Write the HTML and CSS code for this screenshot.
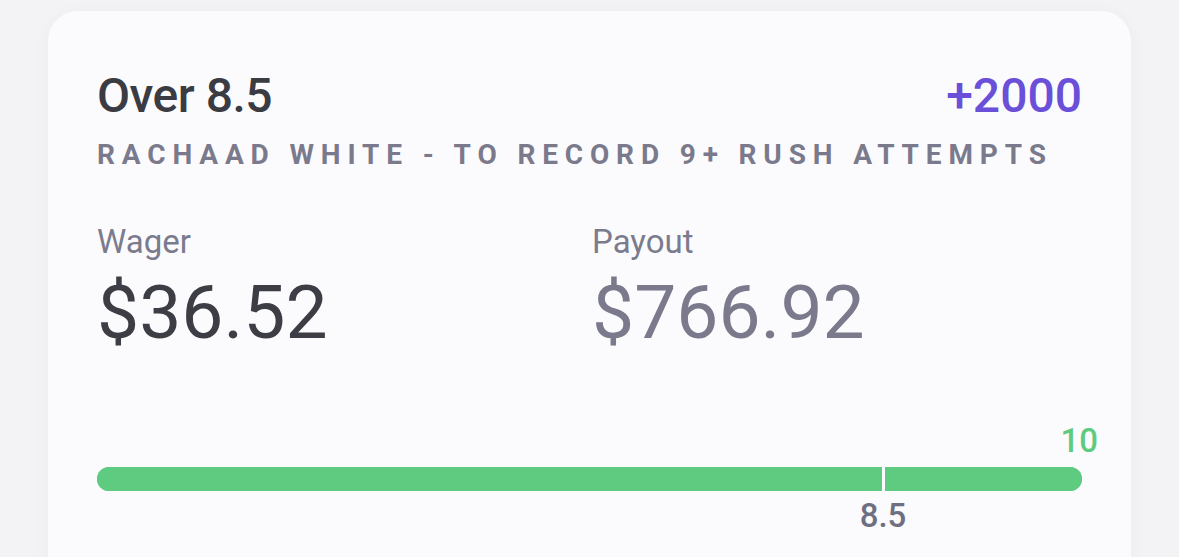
FILE: index.html
```html
<!DOCTYPE html>
<html>
<head>
<meta charset="utf-8">
<link rel="stylesheet" href="styles.css">
</head>
<body>
<div class="card">
  <div class="head">
    <div class="title">Over 8.5</div>
    <div class="odds">+2000</div>
  </div>
  <div class="sub">RACHAAD WHITE - TO RECORD 9+ RUSH ATTEMPTS</div>
  <div class="amounts">
    <div class="col">
      <div class="label">Wager</div>
      <div class="value dark">$36.52</div>
    </div>
    <div class="col">
      <div class="label">Payout</div>
      <div class="value">$766.92</div>
    </div>
  </div>
  <div class="progress">
    <div class="track">
      <div class="end-label">10</div>
      <div class="fill"></div>
      <div class="tick" style="left: 79.8%"></div>
      <div class="tick-label" style="left: 79.8%">8.5</div>
    </div>
  </div>
</div>
</body>
</html>
```
FILE: styles.css
```css
html, body {
  margin: 0;
  padding: 0;
  background: #f3f3f5;
  font-family: Roboto, "Liberation Sans", sans-serif;
  overflow: hidden;
}
.card {
  margin: 11px 48px 0 48px;
  height: 600px;
  background: #fbfbfd;
  border-radius: 30px;
  box-shadow: 0 2px 18px rgba(0,0,0,0.035);
  padding: 57px 49px 0 49px;
  box-sizing: border-box;
  display: flex;
  flex-direction: column;
}
.head {
  display: flex;
  justify-content: space-between;
  align-items: baseline;
  line-height: 56px;
  font-size: 48px;
  font-weight: 500;
}
.title {
  color: #3b3b43;
  letter-spacing: -0.5px;
}
.odds {
  color: #6a4fd9;
}
.sub {
  margin-top: 15px;
  font-size: 28px;
  line-height: 32px;
  font-weight: 700;
  letter-spacing: 6.85px;
  color: #7a7a8c;
  white-space: nowrap;
}
.amounts {
  margin-top: 51px;
  display: grid;
  grid-template-columns: 495px 1fr;
}
.label {
  font-size: 33px;
  line-height: 40px;
  color: #7b7b8e;
}
.value {
  margin-top: 8px;
  font-size: 75px;
  line-height: 84px;
  color: #7a7a8c;
}
.value.dark {
  color: #3d3d45;
}
.progress {
  margin-top: 76px;
  padding-top: 37px;
}
.track {
  position: relative;
  height: 24px;
  border-radius: 12px;
  background: #5fcb80;
}
.fill {
  height: 100%;
  border-radius: 12px;
  background: #5fcb80;
}
.tick {
  position: absolute;
  top: 0;
  bottom: 0;
  width: 3px;
  margin-left: -1.5px;
  background: #fbfbfd;
}
.tick-label {
  position: absolute;
  top: 29px;
  transform: translateX(-50%);
  font-size: 33px;
  font-weight: 500;
  line-height: 40px;
  color: #6f6f82;
}
.end-label {
  position: absolute;
  right: -16px;
  bottom: 30px;
  font-size: 33px;
  font-weight: 500;
  line-height: 40px;
  color: #5fcb80;
}
```
